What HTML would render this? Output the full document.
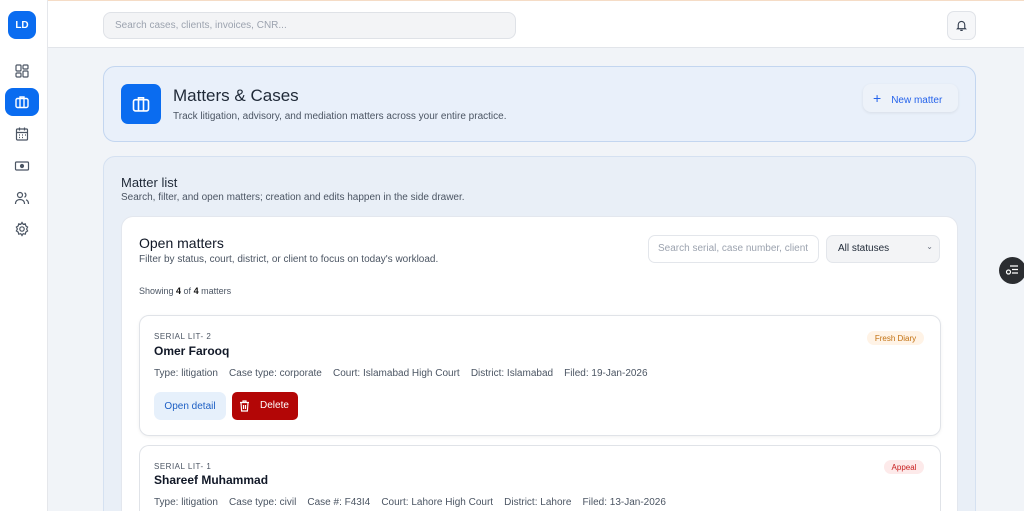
<!DOCTYPE html>
<html style="height:511px;overflow:hidden"><head><meta charset="utf-8"><style>
*{box-sizing:border-box;margin:0;padding:0}
body{width:1024px;height:511px;overflow:hidden;background:#f1f4f8;font-family:"Liberation Sans",sans-serif;color:#1f2937;position:relative}
.abs{position:absolute}
.side{left:0;top:0;width:48px;height:511px;background:#fff;border-right:1px solid #e5e7eb}
.top{left:48px;top:0;width:976px;height:48px;background:#fff;border-bottom:1px solid #e2e5ea;border-top:1px solid #f5dcc6}
.ico{position:absolute;left:14px;width:16px;height:16px}
.c{display:flex;align-items:center;justify-content:center}
</style></head><body>
<div class="abs side">
 <div class="abs c" style="left:8px;top:11px;width:28px;height:28px;background:#0a6cf0;border-radius:8px;color:#fff;font-size:10px;font-weight:bold">LD</div>
 <svg class="ico" style="top:63px" viewBox="0 0 16 16" fill="none" stroke="#4b5563" stroke-width="1.2"><rect x="2" y="2" width="5" height="6" rx="1"/><rect x="9" y="2" width="5" height="4" rx="1"/><rect x="2" y="10" width="5" height="4" rx="1"/><rect x="9" y="8" width="5" height="6" rx="1"/></svg>
 <div class="abs" style="left:5px;top:88px;width:34px;height:28px;background:#0a6cf0;border-radius:8px"></div>
 <svg class="ico" style="top:94px" viewBox="0 0 16 16" fill="none" stroke="#fff" stroke-width="1.4"><rect x="2" y="4.5" width="12" height="9" rx="1.5"/><path d="M6 4.5V3h4v1.5M6 4.5v9M10 4.5v9"/></svg>
 <svg class="ico" style="top:126px" viewBox="0 0 16 16" fill="none" stroke="#4b5563" stroke-width="1.2"><rect x="2.5" y="3" width="11" height="11" rx="1"/><path d="M2.5 6.5h11M5.5 1.5v3M10.5 1.5v3M5 9h1M8 9h1M11 9h1M5 11.5h1M8 11.5h1"/></svg>
 <svg class="ico" style="top:158px" viewBox="0 0 16 16" fill="none" stroke="#4b5563" stroke-width="1.2"><rect x="1.5" y="4" width="13" height="8" rx="1"/><circle cx="8" cy="8" r="1.5" fill="#4b5563"/></svg>
 <svg class="ico" style="top:190px" viewBox="0 0 16 16" fill="none" stroke="#4b5563" stroke-width="1.2"><circle cx="6" cy="5" r="2.5"/><path d="M1.5 14c0-3 2-4.5 4.5-4.5s4.5 1.5 4.5 4.5M10.5 2.8a2.5 2.5 0 010 4.5M12 9.8c1.6.5 2.5 2 2.5 4.2"/></svg>
 <svg class="ico" style="top:221px" viewBox="0 0 16 16" fill="none" stroke="#4b5563" stroke-width="1.2"><circle cx="8" cy="8" r="2.2"/><path d="M8 1.5l1.2 1.8 2.1-.5.5 2.1 1.8 1.2-1 1.9 1 1.9-1.8 1.2-.5 2.1-2.1-.5L8 14.5l-1.2-1.8-2.1.5-.5-2.1-1.8-1.2 1-1.9-1-1.9 1.8-1.2.5-2.1 2.1.5z"/></svg>
</div>
<div class="abs top">
 <div class="abs" style="left:55px;top:11px;width:413px;height:27px;background:#f3f4f6;border:1px solid #dfe2e7;border-radius:8px;font-size:10px;color:#9ca3af;line-height:25px;padding-left:11px">Search cases, clients, invoices, CNR...</div>
 <div class="abs" style="left:899px;top:10px;width:29px;height:29px;background:#f6f7f9;border:1px solid #e0e3e8;border-radius:7px"></div>
 <svg class="abs" style="left:907px;top:18px" width="13" height="13" viewBox="0 0 16 16" fill="none" stroke="#374151" stroke-width="1.4"><path d="M4 11V7a4 4 0 018 0v4l1 1H3zM6.5 14h3"/></svg>
</div>
<div class="abs" style="left:103px;top:66px;width:873px;height:76px;background:#e9f0fa;border:1.5px solid #c3d6f0;border-radius:12px"></div>
<div class="abs" style="left:121px;top:84px;width:40px;height:40px;background:#0a6cf0;border-radius:7px"></div>
<svg class="abs" style="left:131px;top:94px" width="20" height="20" viewBox="0 0 16 16" fill="none" stroke="#fff" stroke-width="1.3"><rect x="2" y="4.5" width="12" height="9" rx="1.5"/><path d="M6 4.5V3h4v1.5M6 4.5v9M10 4.5v9"/></svg>
<div class="abs" style="left:173px;top:86px;font-size:17px;color:#1f2937">Matters &amp; Cases</div>
<div class="abs" style="left:173px;top:111px;font-size:10px;color:#4b5563">Track litigation, advisory, and mediation matters across your entire practice.</div>
<div class="abs" style="left:863px;top:84px;width:95px;height:28px;background:#edf2f9;border-radius:8px;box-shadow:0 1px 3px rgba(0,0,0,.08);font-size:10px;color:#2563eb;line-height:28px;padding-left:10px"><span style="font-size:14px;margin-right:10px">+</span>New matter</div>
<div class="abs" style="left:103px;top:156px;width:873px;height:370px;background:#e9eff7;border:1.5px solid #d5e1f1;border-radius:12px"></div>
<div class="abs" style="left:121px;top:175px;font-size:13px;color:#1f2937">Matter list</div>
<div class="abs" style="left:121px;top:192px;font-size:10px;color:#4b5563">Search, filter, and open matters; creation and edits happen in the side drawer.</div>
<div class="abs" style="left:121px;top:216px;width:837px;height:295px;background:#fff;border:1px solid #e3e7ee;border-bottom:none;border-radius:12px 12px 0 0"></div>
<div class="abs" style="left:139px;top:235px;font-size:14px;color:#111827">Open matters</div>
<div class="abs" style="left:139px;top:254px;font-size:10px;color:#4b5563">Filter by status, court, district, or client to focus on today's workload.</div>
<div class="abs" style="left:648px;top:235px;width:171px;height:28px;border:1px solid #e3e6eb;border-radius:7px;font-size:10px;color:#9ca3af;line-height:26px;padding-left:9px;white-space:nowrap;overflow:hidden">Search serial, case number, client</div>
<div class="abs" style="left:826px;top:235px;width:114px;height:28px;background:#f3f4f6;border:1px solid #e3e6eb;border-radius:7px;font-size:10px;color:#1f2937;line-height:26px;padding-left:11px">All statuses<span style="position:absolute;right:6px;top:-2px;font-size:8px;color:#6b7280">&#8964;</span></div>
<div class="abs" style="left:139px;top:286px;font-size:9px;color:#4b5563">Showing <b style="color:#111">4</b> of <b style="color:#111">4</b> matters</div>
<div class="abs" style="left:139px;top:315px;width:802px;height:121px;border:1px solid #e0e3e8;border-radius:10px;box-shadow:0 1px 3px rgba(0,0,0,.06)"></div>
<div class="abs" style="left:154px;top:332px;font-size:8px;color:#4b5563;letter-spacing:.5px">SERIAL LIT- 2</div>
<div class="abs" style="left:154px;top:344px;font-size:12px;font-weight:bold;color:#111827">Omer Farooq</div>
<div class="abs" style="left:154px;top:368px;font-size:10px;color:#4b5563;white-space:nowrap">Type: litigation &nbsp;&nbsp; Case type: corporate &nbsp;&nbsp; Court: Islamabad High Court &nbsp;&nbsp; District: Islamabad &nbsp;&nbsp; Filed: 19-Jan-2026</div>
<div class="abs c" style="left:867px;top:331px;width:57px;height:14px;background:#fff3e6;border-radius:7px;font-size:8px;color:#c2700f">Fresh Diary</div>
<div class="abs c" style="left:154px;top:392px;width:72px;height:28px;background:#e6f0fb;border-radius:7px;font-size:10px;color:#1d5fc4">Open detail</div>
<div class="abs" style="left:232px;top:392px;width:66px;height:28px;background:#b30606;border-radius:5px;font-size:10px;color:#fff;line-height:28px;padding-left:28px">Delete</div>
<svg class="abs" style="left:239px;top:400px" width="11" height="12" viewBox="0 0 11 12" fill="none" stroke="#fff" stroke-width="1.2"><path d="M1 2.5h9M4 2.5V1h3v1.5M2 2.5l.6 8.5h5.8L9 2.5M4.5 5v4M6.5 5v4"/></svg>
<div class="abs" style="left:139px;top:445px;width:802px;height:66px;border:1px solid #e0e3e8;border-bottom:none;border-radius:10px 10px 0 0;background:#fff"></div>
<div class="abs" style="left:154px;top:462px;font-size:8px;color:#4b5563;letter-spacing:.5px">SERIAL LIT- 1</div>
<div class="abs" style="left:154px;top:473px;font-size:12px;font-weight:bold;color:#111827">Shareef Muhammad</div>
<div class="abs" style="left:154px;top:497px;font-size:10px;color:#4b5563;white-space:nowrap">Type: litigation &nbsp;&nbsp; Case type: civil &nbsp;&nbsp; Case #: F43I4 &nbsp;&nbsp; Court: Lahore High Court &nbsp;&nbsp; District: Lahore &nbsp;&nbsp; Filed: 13-Jan-2026</div>
<div class="abs c" style="left:884px;top:460px;width:40px;height:14px;background:#fdeaea;border-radius:7px;font-size:8px;color:#c81e1e">Appeal</div>
<div class="abs" style="left:999px;top:257px;width:27px;height:27px;background:#2b2d31;border-radius:50%"></div>
<svg class="abs" style="left:1005px;top:264px" width="14" height="13" viewBox="0 0 14 13" fill="none" stroke="#fff" stroke-width="1.2"><path d="M5 2h8M7 5.5h6M7 9h6"/><circle cx="3.5" cy="8" r="2"/></svg>
</body></html>
